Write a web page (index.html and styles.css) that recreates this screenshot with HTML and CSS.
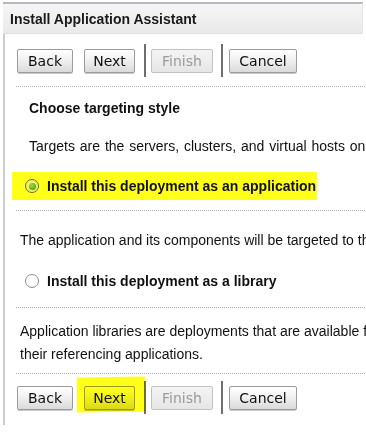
FILE: index.html
```html
<!DOCTYPE html>
<html>
<head>
<meta charset="utf-8">
<link rel="stylesheet" href="styles.css">
</head>
<body>
<div class="window">
  <div class="header">Install Application Assistant</div>
  <div class="content">
    <div class="btnrow">
      <button class="btn b-back">Back</button>
      <button class="btn b-next">Next</button>
      <span class="sep sep1"></span>
      <button class="btn b-finish" disabled>Finish</button>
      <span class="sep sep2"></span>
      <button class="btn b-cancel">Cancel</button>
    </div>
    <div class="divider d1"></div>
    <h2 class="title">Choose targeting style</h2>
    <p class="desc desc-targets">Targets are the servers, clusters, and virtual hosts on which this deployment will run.</p>
    <div class="option option-hl">
      <span class="radio radio-on"><span class="dot"></span></span>
      <span class="label">Install this deployment as an application</span>
    </div>
    <div class="divider d2"></div>
    <p class="desc desc-app">The application and its components will be targeted to the same locations.</p>
    <div class="option option-lib">
      <span class="radio"></span>
      <span class="label">Install this deployment as a library</span>
    </div>
    <div class="divider d3"></div>
    <p class="desc desc-lib">Application libraries are deployments that are available for other deployments to share.<br>their referencing applications.</p>
    <div class="divider d4"></div>
    <div class="btnrow btnrow-bottom">
      <button class="btn b-back">Back</button>
      <span class="hl"><button class="btn b-next">Next</button></span>
      <span class="sep sep1"></span>
      <button class="btn b-finish" disabled>Finish</button>
      <span class="sep sep2"></span>
      <button class="btn b-cancel">Cancel</button>
    </div>
  </div>
</div>
</body>
</html>
```
FILE: styles.css
```css
html, body {
  margin: 0;
  padding: 0;
  background: #ffffff;
  overflow: hidden;
}
body {
  width: 366px;
  height: 432px;
  font-family: "Liberation Sans", Arial, sans-serif;
  color: #111;
}
.window {
  margin: 2px 0 0 3px;
  width: 360px;
}
.header {
  height: 28px;
  padding-top: 1px;
  line-height: 29px;
  padding-left: 7px;
  font-size: 14px;
  font-weight: bold;
  color: #1a1a1a;
  background: linear-gradient(#f6f6f6, #e9e9e9);
  border-top: 2px solid #b4b9c1;
  border-bottom: 1px solid #dedede;
  border-right: 1px solid #e4e4e4;
}
.content {
  border-left: 2px solid #cccccc;
  padding-left: 12px;
  height: 391px;
  box-sizing: border-box;
  padding-top: 10px;
  width: 400px;
}
.btnrow {
  display: flex;
  align-items: center;
  height: 33px;
}
.btn {
  height: 24px;
  box-sizing: border-box;
  padding: 0;
  font-family: "DejaVu Sans", sans-serif;
  font-size: 14px;
  color: #111;
  border: 1px solid #9c9c9c;
  border-radius: 2px;
  background: linear-gradient(#ffffff, #f1f1f1 45%, #dadada);
  box-shadow: 0 1px 0 #c9c9c9;
}
.b-back { width: 56px; }
.b-next { width: 51px; margin-left: 11px; }
.hl .b-next { margin-left: 0; }
.hl { margin-left: 11px; position: relative; display: flex; }
.hl::after {
  content: "";
  position: absolute;
  left: -7px;
  right: -10px;
  top: -9px;
  bottom: -2px;
  background: #ffff1a;
  mix-blend-mode: multiply;
  transform: skewY(-1deg);
}
.b-finish {
  width: 62px;
  color: #9b9b9b;
  border-color: #c2c2c2;
  background: linear-gradient(#f4f4f4, #e6e6e6);
  box-shadow: none;
}
.b-cancel { width: 68px; margin-left: 6px; }
.sep {
  width: 2px;
  height: 33px;
  background: #6e6e6e;
}
.sep1 { margin-left: 9px; margin-right: 5px; }
.sep2 { margin-left: 8px; }
.divider {
  border-top: 1px dotted #b0b0b0;
  margin-left: -1px;
}
.d1 { margin-top: 9px; }
.title {
  margin: 11px 0 0 12px;
  font-size: 14px;
  line-height: 20px;
  font-weight: bold;
  color: #111;
}
.desc {
  margin: 0 0 0 3px;
  font-size: 14px;
  line-height: 20px;
  white-space: nowrap;
}
.desc-targets { margin: 18px 0 0 12px; word-spacing: 1px; }
.option {
  display: flex;
  align-items: center;
  height: 28px;
  width: fit-content;
}
.option-hl {
  margin: 16px 0 0 -5px;
  padding: 0 1px 0 13px;
  background: #ffff1a;
}
.option-lib {
  margin: 17px 0 0 0;
  padding-left: 8px;
}
.radio {
  width: 14px;
  height: 14px;
  box-sizing: border-box;
  border: 1.5px solid #8a8a8a;
  border-radius: 50%;
  background: #ffffff;
  display: flex;
  align-items: center;
  justify-content: center;
}
.radio-on {
  border-color: #6a6a2a;
  background: #f2f26a;
}
.dot {
  width: 7px;
  height: 7px;
  border-radius: 50%;
  background: radial-gradient(circle at 40% 35%, #9fdc3a, #3f8f10);
}
.label {
  margin-left: 8px;
  font-size: 14px;
  font-weight: bold;
  color: #111;
}
.d2 { margin-top: 10px; }
.desc-app { margin-top: 19px; }
.d3 { margin-top: 12px; }
.desc-lib { margin-top: 12px; line-height: 23px; }
.d4 { margin-top: 7px; }
.btnrow-bottom { margin-top: 7px; }
```
